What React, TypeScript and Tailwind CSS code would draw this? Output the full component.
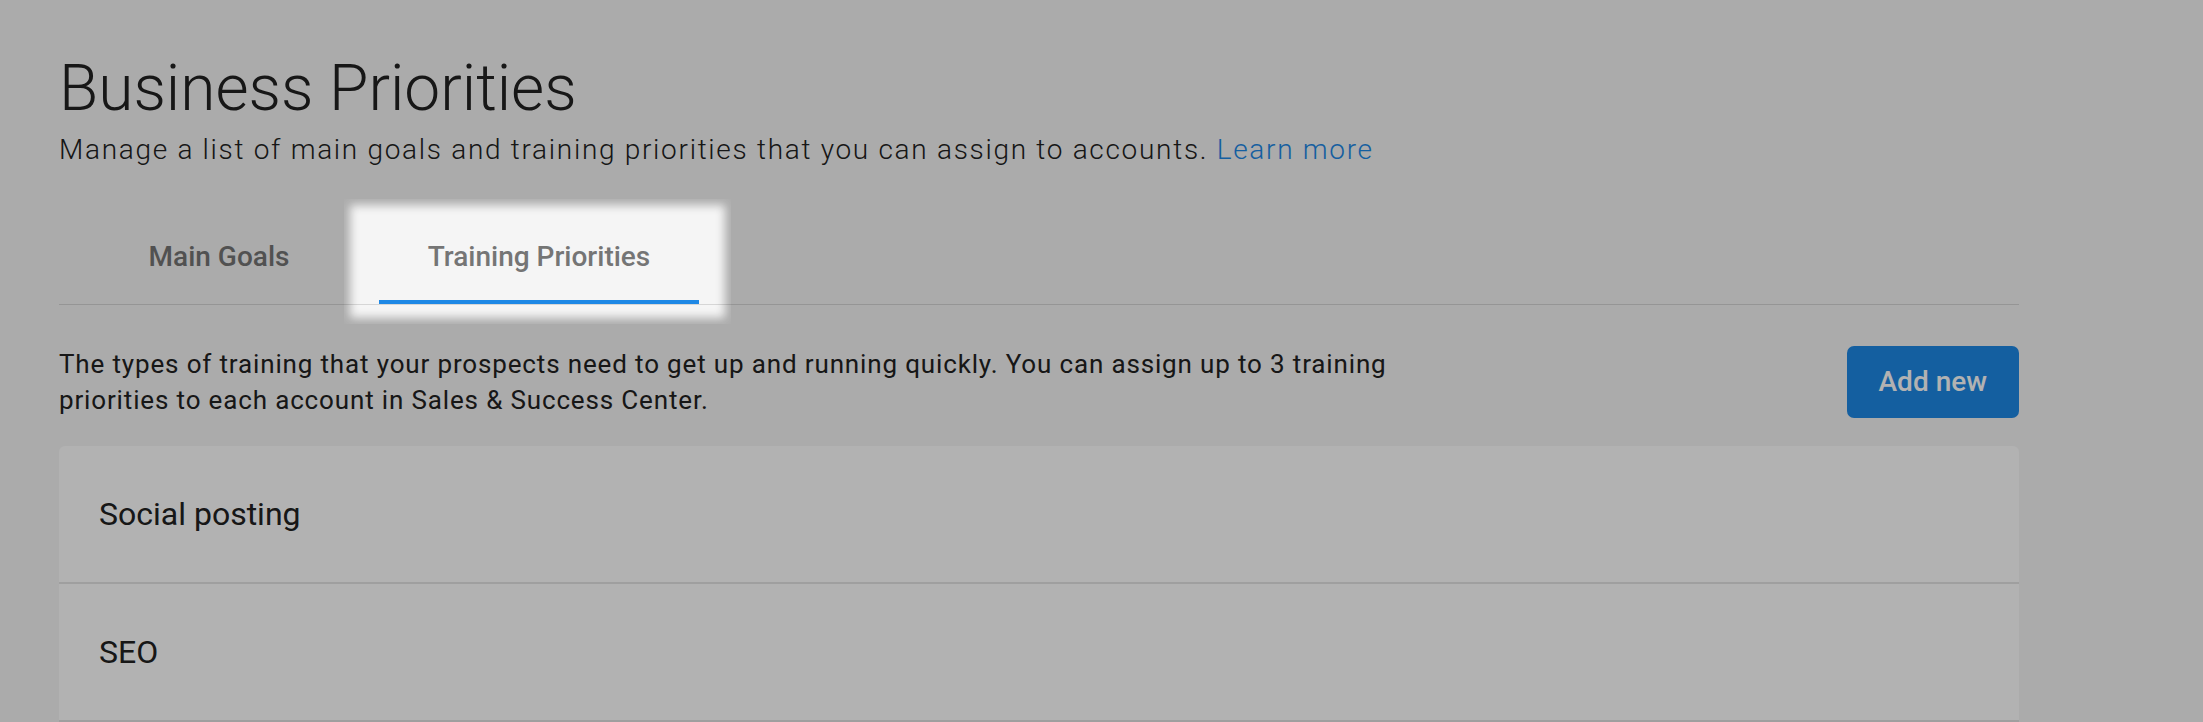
import { useState } from "react";

const priorities = ["Social posting", "SEO"];

export default function App() {
  const [tab, setTab] = useState("training");

  const tabs = [
    { id: "goals", label: "Main Goals" },
    { id: "training", label: "Training Priorities" },
  ];

  return (
    <div
      className="relative h-screen w-full overflow-hidden bg-[#f5f5f5] text-[#212121]"
      style={{ fontFamily: "Roboto, 'Noto Sans', sans-serif" }}
    >
      <div className="pl-[59px] pt-[51px]">
        <div className="w-[1960px]">
          <h1 className="text-[64px] font-light leading-[76px]">Business Priorities</h1>
          <p className="mt-[5px] text-[28px] font-light leading-[36px] tracking-[1.7px]">
            Manage a list of main goals and training priorities that you can assign to accounts.{" "}
            <a href="#" className="text-[#1e88e5]">
              Learn more
            </a>
          </p>

          <div className="mt-[41px] flex border-b border-[#d6d6d6]">
            {tabs.map((t) => (
              <button
                key={t.id}
                onClick={() => setTab(t.id)}
                className="relative flex h-[95px] w-[320px] items-center justify-center text-[28px] font-medium text-[#757575]"
              >
                {t.label}
                {tab === t.id && (
                  <>
                    <span className="absolute bottom-0 left-0 right-0 h-[4px] bg-[#1e88e5]" />
                    {/* onboarding spotlight */}
                    <span className="pointer-events-none absolute -left-[35px] -right-[32px] -top-[10px] -bottom-[20px] z-10 shadow-[0_0_0_9999px_rgba(0,0,0,0.3),inset_0_0_10px_6px_rgba(0,0,0,0.3)]" />
                  </>
                )}
              </button>
            ))}
          </div>

          <div className="mt-[41px] flex items-start justify-between">
            <p className="w-[1380px] text-[26px] leading-[36px] tracking-[0.85px]">
              The types of training that your prospects need to get up and running quickly. You can
              assign up to 3 training priorities to each account in Sales &amp; Success Center.
            </p>
            <button className="h-[72px] rounded-[7px] bg-[#1e88e5] px-[32px] text-[28px] font-medium text-white">
              Add new
            </button>
          </div>

          <div className="mt-[28px] rounded-t-[6px] bg-white">
            {priorities.map((p) => (
              <div
                key={p}
                className="flex h-[138px] items-center border-b-2 border-[#e4e4e4] pl-[40px] text-[32px]"
              >
                {p}
              </div>
            ))}
          </div>
        </div>
      </div>
    </div>
  );
}
